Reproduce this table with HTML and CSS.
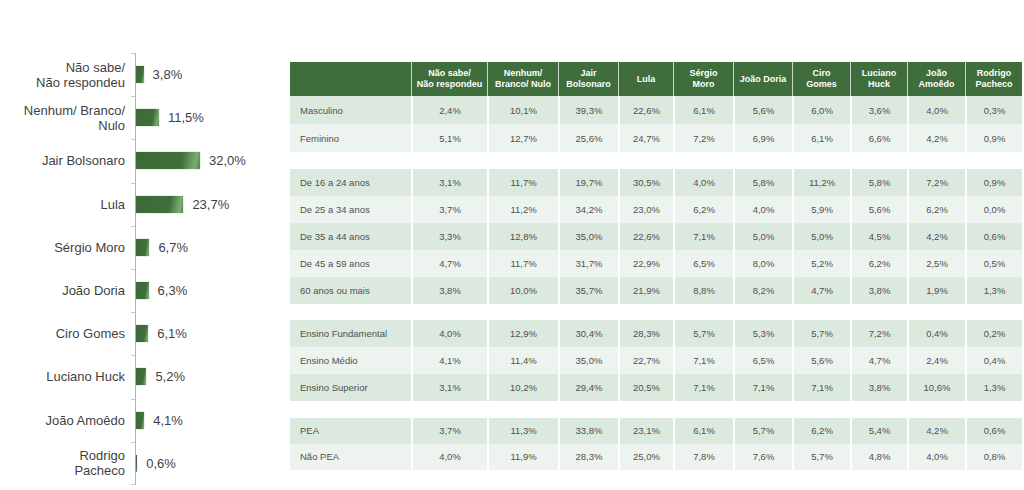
FILE: index.html
```html
<!DOCTYPE html>
<html lang="pt">
<head>
<meta charset="utf-8">
<link rel="stylesheet" href="styles.css">
</head>
<body>
<div class="page">
  <div class="chart">
    <div class="row"><div class="label">Não sabe/<br>Não respondeu</div><div class="plot"><div class="bar" style="width:7.6px"></div><span class="val">3,8%</span></div></div>
    <div class="row"><div class="label">Nenhum/ Branco/<br>Nulo</div><div class="plot"><div class="bar" style="width:23px"></div><span class="val">11,5%</span></div></div>
    <div class="row"><div class="label">Jair Bolsonaro</div><div class="plot"><div class="bar" style="width:64px"></div><span class="val">32,0%</span></div></div>
    <div class="row"><div class="label">Lula</div><div class="plot"><div class="bar" style="width:47.4px"></div><span class="val">23,7%</span></div></div>
    <div class="row"><div class="label">Sérgio Moro</div><div class="plot"><div class="bar" style="width:13.4px"></div><span class="val">6,7%</span></div></div>
    <div class="row"><div class="label">João Doria</div><div class="plot"><div class="bar" style="width:12.6px"></div><span class="val">6,3%</span></div></div>
    <div class="row"><div class="label">Ciro Gomes</div><div class="plot"><div class="bar" style="width:12.2px"></div><span class="val">6,1%</span></div></div>
    <div class="row"><div class="label">Luciano Huck</div><div class="plot"><div class="bar" style="width:10.4px"></div><span class="val">5,2%</span></div></div>
    <div class="row"><div class="label">João Amoêdo</div><div class="plot"><div class="bar" style="width:8.2px"></div><span class="val">4,1%</span></div></div>
    <div class="row last"><div class="label">Rodrigo<br>Pacheco</div><div class="plot"><div class="bar" style="width:1.2px"></div><span class="val">0,6%</span></div></div>
  </div>

  <table class="tbl">
    <colgroup>
      <col style="width:121px"><col style="width:76px"><col style="width:71px"><col style="width:60px"><col style="width:55px"><col style="width:60px"><col style="width:59px"><col style="width:58px"><col style="width:57px"><col style="width:58px"><col style="width:57px">
    </colgroup>
    <thead>
      <tr>
        <th></th>
        <th>Não sabe/<br>Não respondeu</th>
        <th>Nenhum/<br>Branco/ Nulo</th>
        <th>Jair<br>Bolsonaro</th>
        <th>Lula</th>
        <th>Sérgio<br>Moro</th>
        <th>João Doria</th>
        <th>Ciro<br>Gomes</th>
        <th>Luciano<br>Huck</th>
        <th>João<br>Amoêdo</th>
        <th>Rodrigo<br>Pacheco</th>
      </tr>
    </thead>
    <tbody class="g1">
      <tr><td>Masculino</td><td>2,4%</td><td>10,1%</td><td>39,3%</td><td>22,6%</td><td>6,1%</td><td>5,6%</td><td>6,0%</td><td>3,6%</td><td>4,0%</td><td>0,3%</td></tr>
      <tr><td>Feminino</td><td>5,1%</td><td>12,7%</td><td>25,6%</td><td>24,7%</td><td>7,2%</td><td>6,9%</td><td>6,1%</td><td>6,6%</td><td>4,2%</td><td>0,9%</td></tr>
    </tbody>
    <tbody class="gap"><tr><td colspan="11"></td></tr></tbody>
    <tbody class="g2">
      <tr><td>De 16 a 24 anos</td><td>3,1%</td><td>11,7%</td><td>19,7%</td><td>30,5%</td><td>4,0%</td><td>5,8%</td><td>11,2%</td><td>5,8%</td><td>7,2%</td><td>0,9%</td></tr>
      <tr><td>De 25 a 34 anos</td><td>3,7%</td><td>11,2%</td><td>34,2%</td><td>23,0%</td><td>6,2%</td><td>4,0%</td><td>5,9%</td><td>5,6%</td><td>6,2%</td><td>0,0%</td></tr>
      <tr><td>De 35 a 44 anos</td><td>3,3%</td><td>12,8%</td><td>35,0%</td><td>22,6%</td><td>7,1%</td><td>5,0%</td><td>5,0%</td><td>4,5%</td><td>4,2%</td><td>0,6%</td></tr>
      <tr><td>De 45 a 59 anos</td><td>4,7%</td><td>11,7%</td><td>31,7%</td><td>22,9%</td><td>6,5%</td><td>8,0%</td><td>5,2%</td><td>6,2%</td><td>2,5%</td><td>0,5%</td></tr>
      <tr><td>60 anos ou mais</td><td>3,8%</td><td>10,0%</td><td>35,7%</td><td>21,9%</td><td>8,8%</td><td>8,2%</td><td>4,7%</td><td>3,8%</td><td>1,9%</td><td>1,3%</td></tr>
    </tbody>
    <tbody class="gap"><tr><td colspan="11"></td></tr></tbody>
    <tbody class="g3">
      <tr><td>Ensino Fundamental</td><td>4,0%</td><td>12,9%</td><td>30,4%</td><td>28,3%</td><td>5,7%</td><td>5,3%</td><td>5,7%</td><td>7,2%</td><td>0,4%</td><td>0,2%</td></tr>
      <tr><td>Ensino Médio</td><td>4,1%</td><td>11,4%</td><td>35,0%</td><td>22,7%</td><td>7,1%</td><td>6,5%</td><td>5,6%</td><td>4,7%</td><td>2,4%</td><td>0,4%</td></tr>
      <tr><td>Ensino Superior</td><td>3,1%</td><td>10,2%</td><td>29,4%</td><td>20,5%</td><td>7,1%</td><td>7,1%</td><td>7,1%</td><td>3,8%</td><td>10,6%</td><td>1,3%</td></tr>
    </tbody>
    <tbody class="gap"><tr><td colspan="11"></td></tr></tbody>
    <tbody class="g4">
      <tr><td>PEA</td><td>3,7%</td><td>11,3%</td><td>33,8%</td><td>23,1%</td><td>6,1%</td><td>5,7%</td><td>6,2%</td><td>5,4%</td><td>4,2%</td><td>0,6%</td></tr>
      <tr><td>Não PEA</td><td>4,0%</td><td>11,9%</td><td>28,3%</td><td>25,0%</td><td>7,8%</td><td>7,6%</td><td>5,7%</td><td>4,8%</td><td>4,0%</td><td>0,8%</td></tr>
    </tbody>
  </table>
</div>
</body>
</html>
```

FILE: styles.css
```css
* { box-sizing: border-box; }
html, body { margin: 0; padding: 0; background: #fff; }
body {
  font-family: "Liberation Sans", Arial, sans-serif;
  color: #404040;
  width: 1024px;
  height: 490px;
  overflow: hidden;
}
.page {
  display: flex;
  align-items: flex-start;
}

/* bar chart */
.chart {
  width: 290px;
  flex: none;
  padding-top: 53px;
  display: flex;
  flex-direction: column;
}
.row {
  height: 43.2px;
  display: flex;
  align-items: stretch;
}
.label {
  width: 125px;
  margin-right: 10px;
  text-align: right;
  font-size: 13px;
  line-height: 15px;
  color: #3f3f3f;
  display: flex;
  flex-direction: column;
  justify-content: center;
  align-items: flex-end;
}
.plot {
  position: relative;
  flex: 1;
  border-left: 1px solid #b5b5b5;
  display: flex;
  align-items: center;
}
.plot::before {
  content: "";
  position: absolute;
  left: -5px;
  top: 0;
  width: 4px;
  height: 1px;
  background: #c8c8c8;
}
.row.last .plot::after {
  content: "";
  position: absolute;
  left: -5px;
  bottom: 0;
  width: 4px;
  height: 1px;
  background: #c8c8c8;
}
.bar {
  height: 17px;
  background: linear-gradient(100deg, #3b6a37 0%, #3f6f3b 70%, #7cae73 92%, #4f8049 100%);
  box-shadow: 0 0 1px rgba(60,100,55,0.6);
}
.val {
  margin-left: 9px;
  font-size: 13px;
  color: #3f3f3f;
}

/* table */
.tbl {
  margin-top: 62px;
  width: 732px;
  table-layout: fixed;
  border-collapse: separate;
  border-spacing: 0;
  font-size: 9.5px;
  color: #505050;
}
.tbl th {
  height: 34px;
  background: #3f6d3c;
  color: #fff;
  font-weight: bold;
  font-size: 9px;
  line-height: 11px;
  text-align: center;
  padding: 0;
  border-left: 1px solid #c9d8c8;
  white-space: nowrap;
}
.tbl th:first-child { border-left: none; }
.tbl td {
  padding: 0;
  text-align: center;
  border-left: 2px solid #fff;
}
.tbl td:first-child {
  text-align: left;
  padding-left: 10px;
  border-left: none;
}
.tbl tbody tr:nth-child(odd) td { background: #dce9df; }
.tbl tbody tr:nth-child(even) td { background: #edf4ef; }
.g1 td { height: 28px; }
.g2 td, .g3 td { height: 27px; }
.g4 td { height: 26px; }
.tbl tbody.gap tr td {
  height: 16.5px;
  background: #fff;
  border: none;
}
```
